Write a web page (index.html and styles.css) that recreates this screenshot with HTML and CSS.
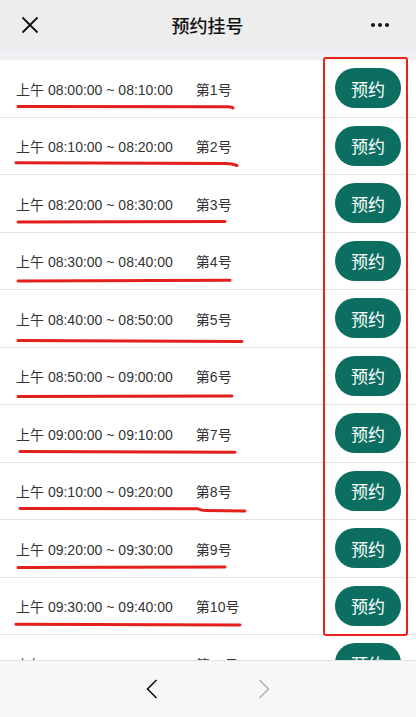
FILE: index.html
```html
<!DOCTYPE html>
<html lang="zh">
<head>
    <meta charset="UTF-8">
    <meta name="viewport" content="width=device-width, initial-scale=1.0">
    <title>预约挂号</title>
    <link rel="stylesheet" href="styles.css">
</head>
<body>
    <div class="navbar">
        <svg class="nav-close" width="18" height="18" viewBox="0 0 18 18"><path d="M1.5 1.5L16.5 16.5M16.5 1.5L1.5 16.5" stroke="#111" stroke-width="1.8" fill="none"/></svg>
        <div class="nav-title">预约挂号</div>
        <svg class="nav-more" width="20" height="6" viewBox="0 0 20 6"><circle cx="3" cy="3" r="2" fill="#111"/><circle cx="10" cy="3" r="2" fill="#111"/><circle cx="17" cy="3" r="2" fill="#111"/></svg>
    </div>
    <div class="gap"></div>

    <div class="list">
        <div class="row">
            <span class="slot">上午 08:00:00 ~ 08:10:00<span class="num">第1号</span></span>
            <button class="btn">预约</button>
            <svg class="mark" viewBox="0 0 260 58"><path d="M18 46.5 L228 46.8 Q232 47 233 48" /></svg>
        </div>
        <div class="row">
            <span class="slot">上午 08:10:00 ~ 08:20:00<span class="num">第2号</span></span>
            <button class="btn">预约</button>
            <svg class="mark" viewBox="0 0 260 58"><path d="M16 44.8 L226 45.5 Q232 45.6 237 47.5" /></svg>
        </div>
        <div class="row">
            <span class="slot">上午 08:20:00 ~ 08:30:00<span class="num">第3号</span></span>
            <button class="btn">预约</button>
            <svg class="mark" viewBox="0 0 260 58"><path d="M18 47 L225 46.5" /></svg>
        </div>
        <div class="row">
            <span class="slot">上午 08:30:00 ~ 08:40:00<span class="num">第4号</span></span>
            <button class="btn">预约</button>
            <svg class="mark" viewBox="0 0 260 58"><path d="M18 48 L230 47.3" /></svg>
        </div>
        <div class="row">
            <span class="slot">上午 08:40:00 ~ 08:50:00<span class="num">第5号</span></span>
            <button class="btn">预约</button>
            <svg class="mark" viewBox="0 0 260 58"><path d="M18 50.5 L242 51.5" /></svg>
        </div>
        <div class="row">
            <span class="slot">上午 08:50:00 ~ 09:00:00<span class="num">第6号</span></span>
            <button class="btn">预约</button>
            <svg class="mark" viewBox="0 0 260 58"><path d="M18 48.5 L232 48" /></svg>
        </div>
        <div class="row">
            <span class="slot">上午 09:00:00 ~ 09:10:00<span class="num">第7号</span></span>
            <button class="btn">预约</button>
            <svg class="mark" viewBox="0 0 260 58"><path d="M20 46.5 L235 47.2" /></svg>
        </div>
        <div class="row">
            <span class="slot">上午 09:10:00 ~ 09:20:00<span class="num">第8号</span></span>
            <button class="btn">预约</button>
            <svg class="mark" viewBox="0 0 260 58"><path d="M20 45.5 L198 45.8 Q201 47.5 206 47.5 L245 48" /></svg>
        </div>
        <div class="row">
            <span class="slot">上午 09:20:00 ~ 09:30:00<span class="num">第9号</span></span>
            <button class="btn">预约</button>
            <svg class="mark" viewBox="0 0 260 58"><path d="M18 47.5 L225 47" /></svg>
        </div>
        <div class="row">
            <span class="slot">上午 09:30:00 ~ 09:40:00<span class="num">第10号</span></span>
            <button class="btn">预约</button>
            <svg class="mark" viewBox="0 0 260 58"><path d="M16 46.3 L240 47" /></svg>
        </div>
        <div class="row">
            <span class="slot">上午 09:40:00 ~ 09:50:00<span class="num">第11号</span></span>
            <button class="btn">预约</button>
        </div>
    </div>

    <div class="mark-box"></div>

    <div class="toolbar">
        <svg width="12" height="20" viewBox="0 0 12 20"><path d="M10.5 1L1.5 10L10.5 19" stroke="#111" stroke-width="1.6" fill="none"/></svg>
        <svg width="12" height="20" viewBox="0 0 12 20"><path d="M1.5 1L10.5 10L1.5 19" stroke="#b4b4b4" stroke-width="1.6" fill="none"/></svg>
    </div>
</body>
</html>
```

FILE: styles.css
```css
body {
    margin: 0;
    font-family: "Liberation Sans", "Noto Sans CJK SC", sans-serif;
    background-color: #f0eff4;
    color: #333;
}
.navbar {
    height: 50px;
    background-color: #ededed;
    display: flex;
    align-items: center;
    justify-content: space-between;
    padding: 0 26px 0 21px;
}
.nav-title {
    font-family: "Noto Sans CJK SC", sans-serif;
    font-size: 18px;
    font-weight: 500;
    color: #111;
    margin-left: 6px;
}
.gap {
    height: 10px;
}
.list {
    background-color: #fff;
}
.row {
    position: relative;
    height: 56.5px;
    border-bottom: 1px solid #e3e3e3;
    display: flex;
    align-items: center;
    justify-content: space-between;
    padding: 0 15px 0 16px;
}
.slot {
    font-size: 14px;
    color: #333;
    margin-top: 1px;
}
.num {
    margin-left: 23px;
}
.btn {
    width: 66px;
    height: 40px;
    border: none;
    border-radius: 20px;
    background-color: #0b6e60;
    color: #fff;
    font-family: "Noto Sans CJK SC", sans-serif;
    font-size: 17px;
    padding: 0;
}
.mark {
    position: absolute;
    left: 0;
    top: 0;
    width: 260px;
    height: 58px;
}
.mark path {
    stroke: #e3201b;
    stroke-width: 3;
    stroke-linecap: round;
    fill: none;
}
.mark-box {
    position: absolute;
    left: 323px;
    top: 57px;
    width: 81px;
    height: 575px;
    border: 2.5px solid #e8231c;
    border-radius: 3px;
}
.toolbar {
    position: fixed;
    left: 0;
    right: 0;
    bottom: 0;
    height: 56px;
    background-color: #f7f7f7;
    border-top: 1px solid #e2e2e2;
    display: flex;
    align-items: center;
    justify-content: center;
    gap: 100px;
}
```
